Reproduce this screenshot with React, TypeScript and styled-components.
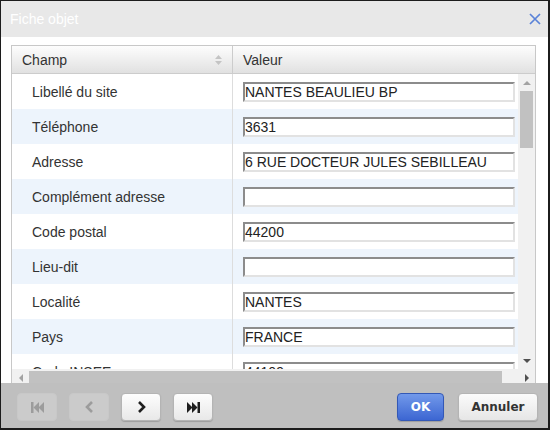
import styled, { createGlobalStyle } from "styled-components";

const GlobalStyle = createGlobalStyle`
  html, body {
    margin: 0;
    padding: 0;
  }
  body {
    font-family: "Liberation Sans", Arial, sans-serif;
    background: #ffffff;
  }
  * {
    box-sizing: border-box;
  }
`;

const Dialog = styled.div`
  width: 550px;
  height: 430px;
  display: flex;
  flex-direction: column;
  border: 1px solid #1c1c1c;
  border-right-width: 2px;
  border-bottom-width: 2px;
  overflow: hidden;
`;

const TitleBar = styled.div`
  height: 36px;
  flex: none;
  display: flex;
  align-items: center;
  justify-content: space-between;
  padding: 0 7px 0 9px;
  background: #e8e8e8;
`;

const Title = styled.span`
  color: #ffffff;
  font-size: 14px;
`;

const CloseButton = styled.span`
  display: flex;
  width: 12px;
  height: 12px;
  cursor: pointer;
`;

const Content = styled.div`
  flex: 1;
  min-height: 0;
  display: flex;
  padding: 8px 12px 0 10px;
  background: #ffffff;
`;

const Grid = styled.div`
  flex: 1;
  display: flex;
  flex-direction: column;
  border: 1px solid #c8c8c8;
  border-bottom: none;
  overflow: hidden;
`;

const HeaderRow = styled.div`
  height: 28px;
  flex: none;
  display: grid;
  grid-template-columns: 221px 1fr;
  border-bottom: 1px solid #cccccc;
  background: linear-gradient(#fdfdfd, #e1e1e1);
`;

const HeaderCell = styled.div<{ $divider?: boolean }>`
  display: flex;
  align-items: center;
  justify-content: space-between;
  padding: 0 10px;
  font-size: 14px;
  color: #333333;
  border-right: ${(p) => (p.$divider ? "1px solid #cccccc" : "none")};
`;

const Body = styled.div`
  height: 295px;
  flex: none;
  display: flex;
`;

const Rows = styled.div`
  flex: 1;
  overflow: hidden;
`;

const Row = styled.div<{ $alt: boolean }>`
  height: 35px;
  display: grid;
  grid-template-columns: 221px 1fr;
  background: ${(p) => (p.$alt ? "#edf4fc" : "#ffffff")};
`;

const LabelCell = styled.div`
  display: flex;
  align-items: center;
  padding-left: 20px;
  font-size: 14px;
  color: #333333;
  border-right: 1px solid #dddddd;
`;

const ValueCell = styled.div`
  display: flex;
  align-items: center;
  padding-left: 10px;
`;

const Field = styled.input`
  width: 272px;
  height: 20px;
  margin: 0;
  padding: 0;
  font-family: "Liberation Sans", Arial, sans-serif;
  font-size: 14px;
  color: #222222;
  background: #ffffff;
  border-style: solid;
  border-width: 2px;
  border-color: #8c8c8c #e2e2e2 #e2e2e2 #8c8c8c;
  outline: none;
`;

const VScroll = styled.div`
  width: 17px;
  flex: none;
  display: flex;
  flex-direction: column;
  align-items: center;
  background: #f1f1f1;
`;

const ArrowBox = styled.div`
  width: 17px;
  height: 17px;
  flex: none;
  display: flex;
  align-items: center;
  justify-content: center;
`;

const Triangle = styled.span<{ $dir: "up" | "down" | "left" | "right"; $dim?: boolean }>`
  width: 0;
  height: 0;
  border: 4px solid transparent;
  ${(p) => {
    const c = p.$dim ? "#a3a3a3" : "#505050";
    if (p.$dir === "up") return `border-bottom-color: ${c}; border-top-width: 0;`;
    if (p.$dir === "down") return `border-top-color: ${c}; border-bottom-width: 0;`;
    if (p.$dir === "left") return `border-right-color: ${c}; border-left-width: 0;`;
    return `border-left-color: ${c}; border-right-width: 0;`;
  }}
`;

const VThumb = styled.div`
  width: 13px;
  height: 57px;
  flex: none;
  background: #c1c1c1;
`;

const Spacer = styled.div`
  flex: 1;
`;

const HScroll = styled.div`
  height: 14px;
  flex: none;
  display: flex;
  align-items: flex-start;
  overflow: hidden;
  background: #f1f1f1;
`;

const HThumb = styled.div`
  width: 473px;
  height: 13px;
  margin-top: 2px;
  flex: none;
  background: #c1c1c1;
`;

const Footer = styled.div`
  height: 45px;
  flex: none;
  display: flex;
  align-items: flex-start;
  justify-content: space-between;
  padding: 10px 10px 0 16px;
  background: #bfbfbf;
`;

const ButtonGroup = styled.div<{ $gap: number }>`
  display: flex;
  gap: ${(p) => p.$gap}px;
`;

const NavButton = styled.button<{ $off?: boolean }>`
  width: 40px;
  height: 28px;
  padding: 0;
  display: flex;
  align-items: center;
  justify-content: center;
  border-radius: 4px;
  border: 1px solid ${(p) => (p.$off ? "#c8c8c8" : "#b4b4b4")};
  background: ${(p) =>
    p.$off ? "#cbcbcb" : "linear-gradient(#fdfdfd, #e8e8e8)"};
  box-shadow: ${(p) => (p.$off ? "none" : "0 1px 1px rgba(0, 0, 0, 0.18)")};
  color: ${(p) => (p.$off ? "#9c9c9c" : "#1e1e1e")};
  cursor: ${(p) => (p.$off ? "default" : "pointer")};
`;

const ActionButton = styled.button<{ $primary?: boolean; $width: number }>`
  width: ${(p) => p.$width}px;
  height: 28px;
  padding: 0;
  border-radius: 4px;
  font-family: "DejaVu Sans", Verdana, sans-serif;
  font-weight: bold;
  font-size: 12px;
  cursor: pointer;
  border: 1px solid ${(p) => (p.$primary ? "#3358b6" : "#b4b4b4")};
  background: ${(p) =>
    p.$primary
      ? "linear-gradient(#7299ea, #3c66d2)"
      : "linear-gradient(#fbfbfb, #e6e6e6)"};
  color: ${(p) => (p.$primary ? "#ffffff" : "#333333")};
  box-shadow: 0 1px 1px rgba(0, 0, 0, 0.18);
`;

const fields = [
  { label: "Libellé du site", value: "NANTES BEAULIEU BP" },
  { label: "Téléphone", value: "3631" },
  { label: "Adresse", value: "6 RUE DOCTEUR JULES SEBILLEAU" },
  { label: "Complément adresse", value: "" },
  { label: "Code postal", value: "44200" },
  { label: "Lieu-dit", value: "" },
  { label: "Localité", value: "NANTES" },
  { label: "Pays", value: "FRANCE" },
  { label: "Code INSEE", value: "44109" },
];

function SortIcon() {
  return (
    <svg width="7" height="10" viewBox="0 0 7 10">
      <path d="M3.5 0 L7 4 L0 4 Z" fill="#c4c4c4" />
      <path d="M0 6 L7 6 L3.5 10 Z" fill="#c4c4c4" />
    </svg>
  );
}

function FirstIcon() {
  return (
    <svg width="13" height="11" viewBox="0 0 13 11">
      <rect x="0" y="0" width="2.5" height="11" fill="currentColor" />
      <path d="M8 0 L8 11 L2.5 5.5 Z" fill="currentColor" />
      <path d="M13 0 L13 11 L7.5 5.5 Z" fill="currentColor" />
    </svg>
  );
}

function LastIcon() {
  return (
    <svg width="13" height="11" viewBox="0 0 13 11">
      <path d="M0 0 L5.5 5.5 L0 11 Z" fill="currentColor" />
      <path d="M5 0 L10.5 5.5 L5 11 Z" fill="currentColor" />
      <rect x="10.5" y="0" width="2.5" height="11" fill="currentColor" />
    </svg>
  );
}

function Chevron({ left }: { left?: boolean }) {
  return (
    <svg width="9" height="12" viewBox="0 0 9 12">
      <path
        d={left ? "M7 1 L2 6 L7 11" : "M2 1 L7 6 L2 11"}
        fill="none"
        stroke="currentColor"
        strokeWidth="2.6"
      />
    </svg>
  );
}

export default function App() {
  return (
    <>
      <GlobalStyle />
      <Dialog>
        <TitleBar>
          <Title>Fiche objet</Title>
          <CloseButton>
            <svg width="12" height="12" viewBox="0 0 12 12">
              <path
                d="M1 1 L11 11 M11 1 L1 11"
                stroke="#5a82d8"
                strokeWidth="1.7"
              />
            </svg>
          </CloseButton>
        </TitleBar>

        <Content>
          <Grid>
            <HeaderRow>
              <HeaderCell $divider>
                Champ
                <SortIcon />
              </HeaderCell>
              <HeaderCell>Valeur</HeaderCell>
            </HeaderRow>

            <Body>
              <Rows>
                {fields.map((f, i) => (
                  <Row key={f.label} $alt={i % 2 === 1}>
                    <LabelCell>{f.label}</LabelCell>
                    <ValueCell>
                      <Field readOnly value={f.value} />
                    </ValueCell>
                  </Row>
                ))}
              </Rows>
              <VScroll>
                <ArrowBox>
                  <Triangle $dir="up" $dim />
                </ArrowBox>
                <VThumb />
                <Spacer />
                <ArrowBox>
                  <Triangle $dir="down" />
                </ArrowBox>
              </VScroll>
            </Body>

            <HScroll>
              <ArrowBox>
                <Triangle $dir="left" $dim />
              </ArrowBox>
              <HThumb />
              <Spacer />
              <ArrowBox>
                <Triangle $dir="right" />
              </ArrowBox>
            </HScroll>
          </Grid>
        </Content>

        <Footer>
          <ButtonGroup $gap={12}>
            <NavButton $off>
              <FirstIcon />
            </NavButton>
            <NavButton $off>
              <Chevron left />
            </NavButton>
            <NavButton>
              <Chevron />
            </NavButton>
            <NavButton>
              <LastIcon />
            </NavButton>
          </ButtonGroup>
          <ButtonGroup $gap={14}>
            <ActionButton $primary $width={47}>
              OK
            </ActionButton>
            <ActionButton $width={80}>Annuler</ActionButton>
          </ButtonGroup>
        </Footer>
      </Dialog>
    </>
  );
}
